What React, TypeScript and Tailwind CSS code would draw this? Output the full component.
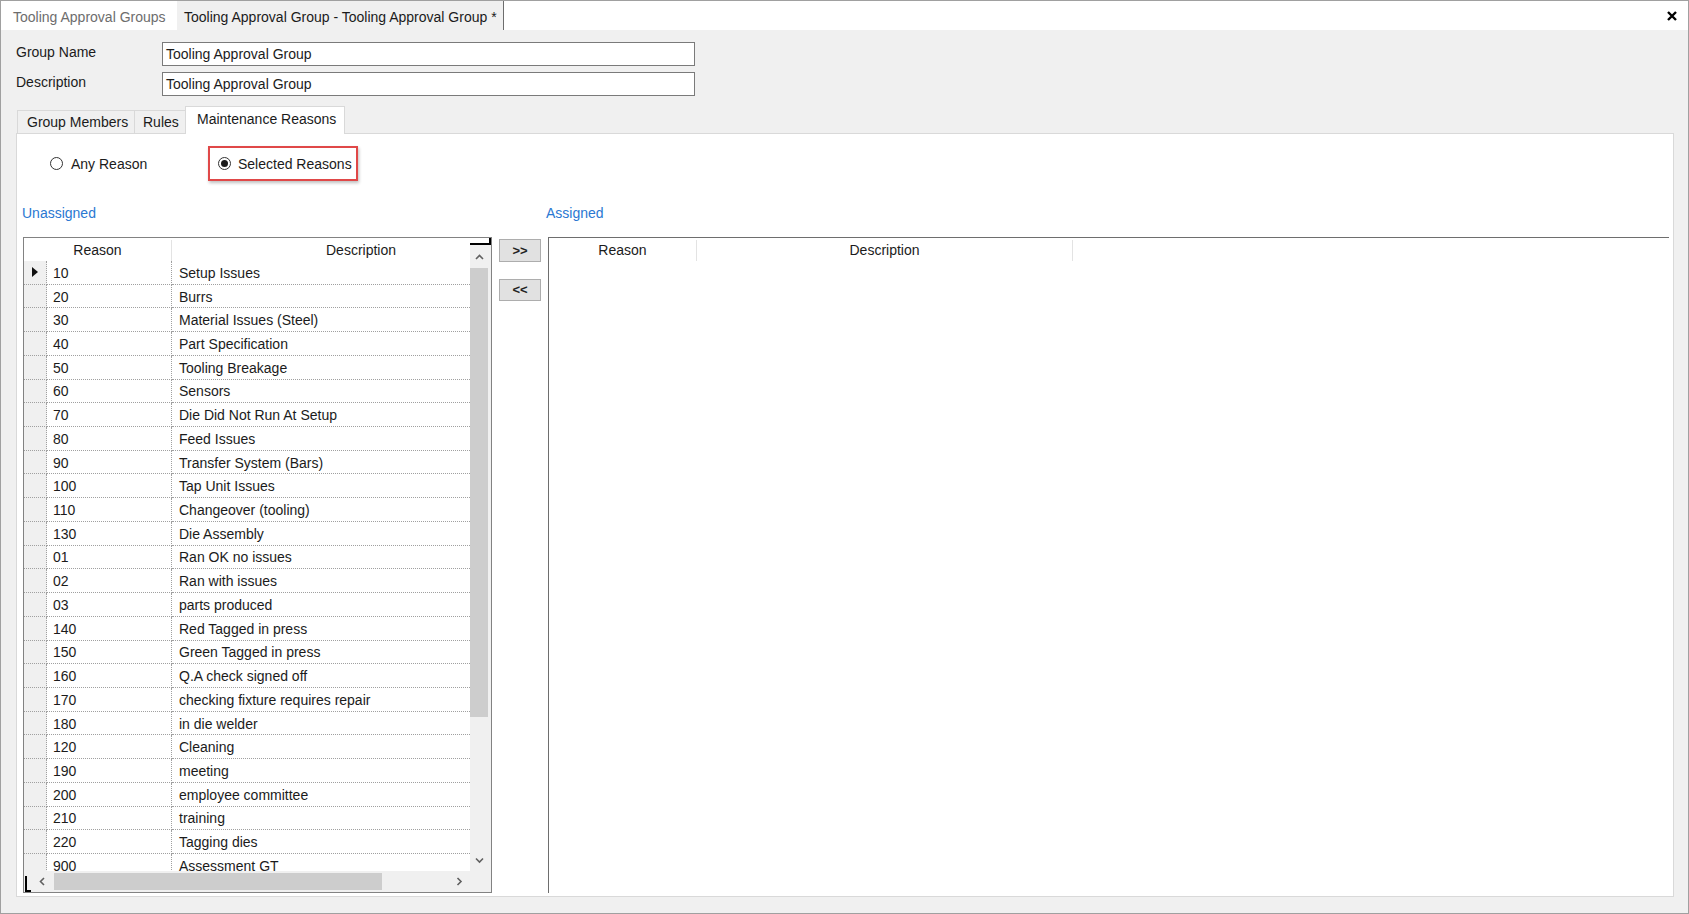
import React from 'react';

const rows: [string, string][] = [
  ['10', 'Setup Issues'],
  ['20', 'Burrs'],
  ['30', 'Material Issues (Steel)'],
  ['40', 'Part Specification'],
  ['50', 'Tooling Breakage'],
  ['60', 'Sensors'],
  ['70', 'Die Did Not Run At Setup'],
  ['80', 'Feed Issues'],
  ['90', 'Transfer System (Bars)'],
  ['100', 'Tap Unit Issues'],
  ['110', 'Changeover (tooling)'],
  ['130', 'Die Assembly'],
  ['01', 'Ran OK no issues'],
  ['02', 'Ran with issues'],
  ['03', 'parts produced'],
  ['140', 'Red Tagged in press'],
  ['150', 'Green Tagged in press'],
  ['160', 'Q.A check signed off'],
  ['170', 'checking fixture requires repair'],
  ['180', 'in die welder'],
  ['120', 'Cleaning'],
  ['190', 'meeting'],
  ['200', 'employee committee'],
  ['210', 'training'],
  ['220', 'Tagging dies'],
  ['900', 'Assessment GT'],
];

function Caret({ dir }: { dir: 'up' | 'down' | 'left' | 'right' }) {
  const d = {
    up: 'M1 5 L4.5 1.5 L8 5',
    down: 'M1 1.5 L4.5 5 L8 1.5',
    left: 'M5 1 L1.5 4.5 L5 8',
    right: 'M1.5 1 L5 4.5 L1.5 8',
  }[dir];
  const horiz = dir === 'up' || dir === 'down';
  return (
    <svg width={horiz ? 9 : 7} height={horiz ? 7 : 9} viewBox={horiz ? '0 0 9 7' : '0 0 7 9'} fill="none">
      <path d={d} stroke="#606060" strokeWidth="1.6" />
    </svg>
  );
}

function Radio({ checked }: { checked?: boolean }) {
  return (
    <span className="flex h-[13px] w-[13px] shrink-0 items-center justify-center rounded-full border border-[#333] bg-white">
      {checked && <span className="h-[7px] w-[7px] rounded-full bg-[#1b1b1b]" />}
    </span>
  );
}

function UnassignedGrid() {
  return (
    <div className="flex h-[656px] w-[469px] shrink-0 flex-col border border-[#828282] bg-white">
      <div className="flex min-h-0 flex-1">
        <div className="min-w-0 flex-1 overflow-hidden">
          <div className="flex h-[23px] w-[526px] items-center pt-[1px]">
            <div className="w-[148px] shrink-0 border-r border-[#e3e3e3] text-center">Reason</div>
            <div className="w-[378px] shrink-0 text-center">Description</div>
          </div>
          {rows.map(([r, d], i) => (
            <div key={r + d} className="flex h-[23.72px] w-[526px] items-stretch">
              <div className="flex w-[23px] shrink-0 items-center justify-center border-r border-b border-dotted border-[#a0a0a0] bg-[#f0f0f0]">
                {i === 0 && (
                  <svg width="6" height="10" viewBox="0 0 6 10">
                    <path d="M0 0 L6 5 L0 10 Z" fill="#111" />
                  </svg>
                )}
              </div>
              <div className="flex w-[125px] shrink-0 items-center border-r border-b border-dotted border-[#a0a0a0] pt-[2px] pl-[6px]">{r}</div>
              <div className="flex w-[378px] shrink-0 items-center border-b border-dotted border-[#a0a0a0] pt-[2px] pl-[7px] whitespace-nowrap">{d}</div>
            </div>
          ))}
        </div>
        <div className="flex w-[21px] shrink-0 flex-col bg-[#f0f0f0]">
          <div className="h-[7px] border-r-2 border-b-2 border-black bg-white" />
          <div className="flex h-[23px] items-center justify-center pt-[2px] pr-[2px]"><Caret dir="up" /></div>
          <div className="h-[449px] w-[18px] bg-[#cdcdcd]" />
          <div className="flex-1" />
          <div className="flex h-[21px] items-center justify-center pr-[2px]"><Caret dir="down" /></div>
        </div>
      </div>
      <div className="flex h-[21px] shrink-0 bg-[#f0f0f0]">
        <div className="flex w-[7px] shrink-0 items-end pl-[1px]">
          <div className="h-[16px] w-[6px] border-l-2 border-b-2 border-black" />
        </div>
        <div className="flex w-[23px] shrink-0 items-center justify-center"><Caret dir="left" /></div>
        <div className="flex items-center"><div className="h-[17px] w-[328px] bg-[#cdcdcd]" /></div>
        <div className="flex-1" />
        <div className="flex w-[22px] shrink-0 items-center justify-center"><Caret dir="right" /></div>
        <div className="w-[21px] shrink-0" />
      </div>
    </div>
  );
}

function AssignedGrid() {
  return (
    <div className="h-[656px] w-[1121px] shrink-0 border-t border-l border-[#6e6e6e] bg-white">
      <div className="flex h-[23px] items-center pt-[1px]">
        <div className="w-[148px] shrink-0 border-r border-[#e3e3e3] text-center">Reason</div>
        <div className="w-[376px] shrink-0 border-r border-[#e3e3e3] text-center">Description</div>
      </div>
    </div>
  );
}

export default function App() {
  return (
    <div className="flex h-[914px] w-[1689px] flex-col border border-[#a0a0a0] bg-[#f0f0f0] font-['Liberation_Sans',Arial,sans-serif] text-[14px] text-[#1b1b1b]">
      <div className="flex h-[29px] shrink-0 items-stretch bg-white">
        <div className="flex w-[176px] items-center pt-[3px] pl-[12px] text-[#6d6d6d]">Tooling Approval Groups</div>
        <div className="flex items-center border-r border-[#6d6d6d] bg-[#f0f0f0] pt-[3px] pr-[6px] pl-[7px]">Tooling Approval Group - Tooling Approval Group *</div>
        <div className="flex-1" />
        <div className="flex w-[22px] items-center justify-center pr-[10px]">
          <svg width="10" height="10" viewBox="0 0 10 10">
            <path d="M1 1 L9 9 M9 1 L1 9" stroke="#000" strokeWidth="2.4" />
          </svg>
        </div>
      </div>

      <div className="flex flex-col gap-[6px] pt-[12px] pl-[15px]">
        <div className="flex items-start">
          <div className="w-[146px] leading-[20px]">Group Name</div>
          <div className="flex h-[24px] w-[533px] items-center border border-[#7a7a7a] bg-white pt-[1px] pl-[3px]">Tooling Approval Group</div>
        </div>
        <div className="flex items-start">
          <div className="w-[146px] leading-[20px]">Description</div>
          <div className="flex h-[24px] w-[533px] items-center border border-[#7a7a7a] bg-white pt-[1px] pl-[3px]">Tooling Approval Group</div>
        </div>
      </div>

      <div className="relative z-10 mt-[10px] ml-[16px] flex h-[27px] items-end">
        <div className="flex h-[23px] w-[117px] items-center border-t border-l border-[#d9d9d9] bg-[#f0f0f0] pl-[9px]">Group Members</div>
        <div className="flex h-[23px] w-[51px] items-center border-t border-l border-[#d9d9d9] bg-[#f0f0f0] pl-[8px]">Rules</div>
        <div className="-mb-px flex h-[28px] w-[160px] items-start border border-b-0 border-[#d9d9d9] bg-white pt-[2px] pl-[11px]">Maintenance Reasons</div>
      </div>

      <div className="ml-[15px] flex h-[764px] w-[1658px] flex-col border border-[#d9d9d9] bg-white">
        <div className="mt-[12px] flex h-[35px] items-center pl-[33px]">
          <label className="flex w-[158px] items-center gap-[8px]">
            <Radio />
            <span className="pt-[2px]">Any Reason</span>
          </label>
          <label className="flex h-[35px] w-[150px] items-center gap-[7px] border-2 border-[#e04848] pl-[8px] shadow-[1px_2px_3px_rgba(0,0,0,0.25)]">
            <Radio checked />
            <span className="pt-[2px]">Selected Reasons</span>
          </label>
        </div>

        <div className="mt-[24px] flex h-[16px] items-center pl-[5px] text-[#2a78d2]">
          <div className="w-[524px]">Unassigned</div>
          <div>Assigned</div>
        </div>

        <div className="mt-[16px] flex items-start pl-[6px]">
          <UnassignedGrid />
          <div className="ml-[7px] flex w-[42px] shrink-0 flex-col pt-[2px]">
            <button className="flex h-[23px] items-center justify-center border border-[#adadad] bg-[#e1e1e1] text-[13px] font-bold text-[#222]">&gt;&gt;</button>
            <button className="mt-[17px] flex h-[22px] items-center justify-center border border-[#adadad] bg-[#e1e1e1] text-[13px] font-bold text-[#222]">&lt;&lt;</button>
          </div>
          <div className="ml-[7px]">
            <AssignedGrid />
          </div>
        </div>
      </div>
    </div>
  );
}
